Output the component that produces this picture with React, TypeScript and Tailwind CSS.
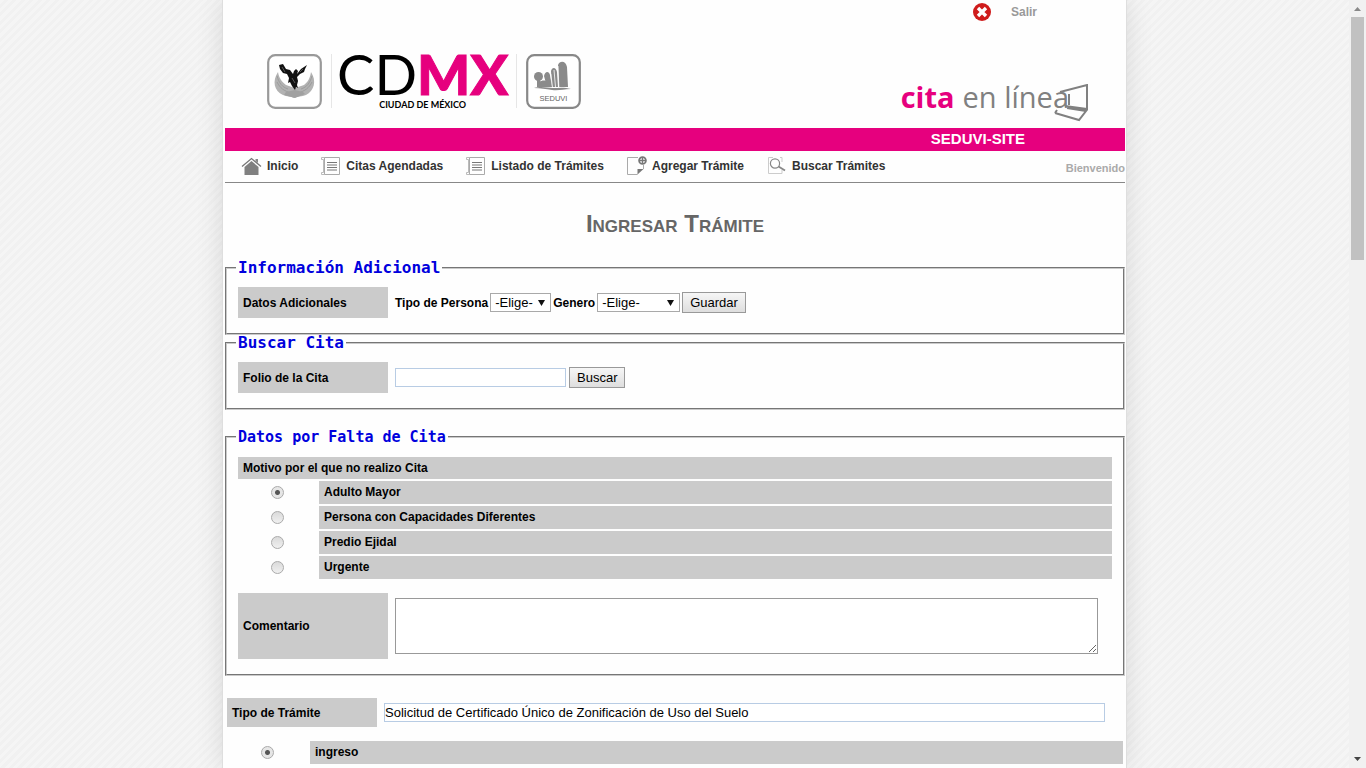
import React, { useState } from "react";

const radioClass =
  "m-0 size-[13px] appearance-none justify-self-center rounded-full border border-[#aaa] bg-[linear-gradient(#dadada,#f0f0f0)] checked:bg-[radial-gradient(circle,#555_0_2px,#e6e6e6_3px)]";
const buttonClass =
  "h-[21px] border border-[#999] bg-[linear-gradient(#f6f6f6,#dedede)] px-[7px] text-[13px] font-normal leading-[17px] text-black";
const inputClass = "h-[19px] border border-[#b8cce4] bg-white text-[13px] font-normal leading-4 text-black";
const legendClass = "ml-[-2px] px-0.5 font-['DejaVu_Sans_Mono',monospace] font-bold leading-4 text-[#0000dd]";
const fieldsetClass =
  "m-0 min-w-0 border-2 border-[#cacaca] pl-[11px] pr-[11px] pb-[15px] [border-style:groove]";

function HomeIcon() {
  return (
    <svg width="21" height="20" viewBox="0 0 21 20" aria-hidden="true">
      <path d="M1 10.500 10.500 2.500 20 10.500" fill="none" stroke="#777" strokeWidth="1.3" />
      <path d="M14.500 3h2.500v4l-2.500-2z" fill="#888" />
      <path d="M3.500 11 10.500 5l7 6v8h-14z" fill="#808080" />
    </svg>
  );
}

function ListIcon() {
  return (
    <svg width="20" height="20" viewBox="0 0 20 20" aria-hidden="true">
      <path d="M3.500 1.500H.5v2h2v13h-2v2h3" fill="none" stroke="#bbb" />
      <path d="M3.500 1.500h15v17h-15z" fill="none" stroke="#aaa" />
      <path d="M6 6.500h10M6 9h10M6 11.500h10M6 14h10" stroke="#777" />
    </svg>
  );
}

function AddPageIcon() {
  return (
    <svg width="20" height="20" viewBox="0 0 20 20" aria-hidden="true">
      <path d="M11 1.500H.5v17h10M16.500 9v4" fill="none" stroke="#aaa" />
      <path d="M10.500 18.500v-5.500h6z" fill="#777" />
      <circle cx="15.500" cy="4.500" r="3.400" fill="#fff" stroke="#777" strokeWidth="1.800" />
      <path d="M15.500 2v5M13 4.500h5" stroke="#777" strokeWidth="1.300" />
    </svg>
  );
}

function SearchIcon() {
  return (
    <svg width="20" height="20" viewBox="0 0 20 20" aria-hidden="true">
      <path d="M6 1.500H1.500v16H15V14M13 1.500h2V6" fill="none" stroke="#ccc" />
      <circle cx="8" cy="7.500" r="4.600" fill="#fff" stroke="#888" strokeWidth="1.200" />
      <path d="m11.500 10.500 6.500 4" stroke="#888" strokeWidth="1.800" />
    </svg>
  );
}

function AngelLogo() {
  return (
    <svg width="55" height="55" viewBox="0 0 55 55" role="img" aria-label="Gobierno de la Ciudad de México">
      <rect x="1.200" y="1.200" width="52.600" height="52.600" rx="7" fill="#fff" stroke="#999" strokeWidth="2.200" />
      <path
        d="M11 18c-6 9-4 19 5 23 4 2 8 1 11 3 3-2 8-1 12-3 8-4 11-14 5-23-1 6-3 10-7 13l-9 3-9-3c-4-3-7-7-8-13z"
        fill="#b2b2b2"
      />
      <path
        d="M10 22c2 7 5 11 11 13M45 22c-2 7-5 11-11 13M10 28c3 6 7 9 14 11M45 28c-3 6-7 9-14 11"
        stroke="#9c9c9c"
        fill="none"
      />
      <path d="m19 38 9-2 8 2 2 2-10 4-11-3z" fill="#a0a0a0" />
      <path
        d="m12 11 4-1 3 5 4 1 3 4 1-3 2-2 2 2-1 3 4-5 6-4-2 4-1 3-4 2-3 3 1 4-1 4 1 3-2-1-1 3-3-4-2-4-2 1 1-5-2-4-4-1-3-4z"
        fill="#111"
      />
      <path d="m15 13 3 5M33 18l3-3M25 24l3 5" stroke="#777" strokeWidth=".7" />
    </svg>
  );
}

function SeduviLogo() {
  return (
    <svg width="55" height="55" viewBox="0 0 55 55" role="img" aria-label="SEDUVI">
      <rect x="1.200" y="1.200" width="52.600" height="52.600" rx="7" fill="#fff" stroke="#888" strokeWidth="2.200" />
      <g fill="#8a8a8a">
        <circle cx="12.500" cy="22.500" r="4.500" />
        <path d="M11 26h3v7h-3zM13 28c3-2 7-2 9 0v5h-9z" />
        <path d="M18 22c1-5 5-5 6-1l2 12h-5zM25 17c1-4 5-4 6 1l1 15h-6zM32 11c2-5 8-4 9 2l1 20h-9z" />
        <path d="M8 34c8-2 13 0 19 0s11-1 18 1c-8 0-12 2-19 1s-11-2-18-2z" />
      </g>
      <path d="M24.800 20 26.500 33M32 12l.8 21M28 16l1.500 17" stroke="#fff" strokeWidth=".8" />
      <text x="27.500" y="47" textAnchor="middle" fontSize="7.500" fontFamily="Liberation Sans, sans-serif" fill="#666">
        SEDUVI
      </text>
    </svg>
  );
}

function Header() {
  return (
    <header>
      <div className="flex h-6 items-center justify-end gap-5 pr-[88px]">
        <svg width="18" height="18" viewBox="0 0 18 18" aria-hidden="true">
          <circle cx="9" cy="9" r="9" fill="#cf1c1c" />
          <path d="m5 5 8 8M13 5l-8 8" stroke="#fff" strokeWidth="3.400" />
        </svg>
        <a href="#salir" className="font-bold text-[#999]">
          Salir
        </a>
      </div>
      <div className="flex h-[104px] justify-between pl-[42px] pr-9">
        <div className="flex items-start gap-[9px] pt-[30px]">
          <AngelLogo />
          <div className="flex h-[54px] flex-col items-center border-x border-[#e6e6e6] pl-[5px] pr-2 font-['Lato',sans-serif]">
            <div className="flex text-[56px] leading-10 text-black">
              <span>CD</span>
              <span className="font-black text-[#e6007e] [-webkit-text-stroke:1px_#e6007e]">MX</span>
            </div>
            <div className="mt-1.5 text-[9px] font-bold leading-[10px] text-black">CIUDAD DE MÉXICO</div>
          </div>
          <SeduviLogo />
        </div>
        <div className="flex items-start pt-[53px] font-['Open_Sans',sans-serif] text-[29px] leading-10">
          <span className="font-bold text-[#e6007e]">cita</span>
          <span className="ml-2 text-[#808080]">en línea</span>
          <svg className="-ml-4 mt-[7px]" width="36" height="38" viewBox="0 0 36 38" aria-hidden="true">
            <path
              d="M7 8 34 1v24L12 22M16 10v11M2 29l24 7 7-9-19-3M2 29l2-3"
              fill="none"
              stroke="#808080"
              strokeWidth="2"
            />
          </svg>
        </div>
      </div>
      <div className="h-[23px] bg-[#e6007e] pr-[100px] text-right text-[15px] font-bold leading-[22px] text-white">
        SEDUVI-SITE
      </div>
    </header>
  );
}

const links = [
  { text: "Inicio", Icon: HomeIcon },
  { text: "Citas Agendadas", Icon: ListIcon },
  { text: "Listado de Trámites", Icon: ListIcon },
  { text: "Agregar Trámite", Icon: AddPageIcon },
  { text: "Buscar Trámites", Icon: SearchIcon },
];

function Nav() {
  return (
    <nav className="flex h-8 items-center border-b border-[#888] pb-0.5 pl-4">
      <ul className="flex gap-[23px]">
        {links.map(({ text, Icon }) => (
          <li key={text}>
            <a href="#tramites" className="flex items-center gap-[5px] font-bold text-[#333]">
              <Icon />
              <span>{text}</span>
            </a>
          </li>
        ))}
      </ul>
      <span className="ml-auto pt-1.5 text-[11px] font-bold text-[#aaa]">Bienvenido</span>
    </nav>
  );
}

function Select({ id, options, wide }: { id: string; options: string[]; wide?: boolean }) {
  return (
    <span className="grid items-center">
      <select
        id={id}
        className={`col-start-1 row-start-1 h-[19px] appearance-none border border-[#a9a9a9] bg-white pl-1 text-[13px] font-normal leading-4 text-black ${
          wide ? "w-[83px]" : "w-[61px]"
        }`}
      >
        {options.map((option) => (
          <option key={option}>{option}</option>
        ))}
      </select>
      <svg
        className="pointer-events-none col-start-1 row-start-1 mr-1.5 justify-self-end"
        width="7"
        height="6"
        viewBox="0 0 7 6"
        aria-hidden="true"
      >
        <path d="M0 0h7L3.500 6z" fill="#111" />
      </svg>
    </span>
  );
}

const reasons = ["Adulto Mayor", "Persona con Capacidades Diferentes", "Predio Ejidal", "Urgente"];

function ReasonList() {
  const [reason, setReason] = useState(reasons[0]);
  return (
    <div className="flex flex-col gap-0.5" role="radiogroup" aria-labelledby="motivo">
      <div id="motivo" className="h-[22px] bg-[#cbcbcb] pl-[5px] leading-[22px]">
        Motivo por el que no realizo Cita
      </div>
      {reasons.map((text, i) => (
        <div key={text} className="grid grid-cols-[79px_1fr] items-center gap-0.5">
          <input
            id={`motivo-${i}`}
            type="radio"
            name="motivo"
            checked={reason === text}
            onChange={() => setReason(text)}
            className={radioClass}
          />
          <label htmlFor={`motivo-${i}`} className="h-[23px] bg-[#cbcbcb] pl-[5px] leading-[22px]">
            {text}
          </label>
        </div>
      ))}
    </div>
  );
}

function ScrollBar() {
  return (
    <div className="flex w-[17px] shrink-0 flex-col items-center bg-[#f1f1f1]" aria-hidden="true">
      <svg width="17" height="17" viewBox="0 0 17 17">
        <path d="M5 11h7l-3.500-4z" fill="#888" />
      </svg>
      <div className="h-[243px] w-[13px] bg-[#c1c1c1]" />
      <svg className="mt-auto" width="17" height="17" viewBox="0 0 17 17">
        <path d="M5 6h7l-3.500 4z" fill="#444" />
      </svg>
    </div>
  );
}

export default function App() {
  const [folio, setFolio] = useState("");
  return (
    <div className="flex h-screen overflow-hidden font-['Liberation_Sans',Arial,sans-serif] text-xs text-black">
      <div className="min-w-0 flex-1 overflow-hidden bg-[repeating-linear-gradient(135deg,#f5f5f5_0_3px,#f1f1f1_3px_6px)]">
        <div className="mx-auto min-h-full w-full max-w-[903px] bg-[#fefefe] pl-0.5 pr-px shadow-[0_0_0_1px_#dedede,0_0_26px_rgba(0,0,0,0.12)]">
          <Header />
          <Nav />
          <main className="font-bold">
            <h1 className="pb-5 pt-6 text-center text-2xl leading-[33px] text-[#666] [font-variant-caps:small-caps]">
              Ingresar Trámite
            </h1>
            <form onSubmit={(e) => e.preventDefault()}>
              <fieldset className={fieldsetClass}>
                <legend className={`${legendClass} text-base`}>Información Adicional</legend>
                <div className="flex items-center gap-[7px] pt-[11px]">
                  <div className="flex h-[31px] w-[150px] items-center bg-[#cbcbcb] pl-[5px]">Datos Adicionales</div>
                  <div className="flex items-center gap-0.5">
                    <label htmlFor="persona">Tipo de Persona</label>
                    <Select id="persona" options={["-Elige-", "Física", "Moral"]} />
                    <label htmlFor="genero">Genero</label>
                    <Select id="genero" options={["-Elige-", "Femenino", "Masculino"]} wide />
                    <button type="button" className={buttonClass}>
                      Guardar
                    </button>
                  </div>
                </div>
              </fieldset>
              <fieldset className={fieldsetClass}>
                <legend className={`${legendClass} text-base`}>Buscar Cita</legend>
                <div className="flex items-center gap-[7px] pt-[11px]">
                  <label htmlFor="folio" className="flex h-[31px] w-[150px] items-center bg-[#cbcbcb] pl-[5px]">
                    Folio de la Cita
                  </label>
                  <div className="flex items-center gap-[3px]">
                    <input
                      id="folio"
                      type="text"
                      value={folio}
                      onChange={(e) => setFolio(e.target.value)}
                      className={`${inputClass} w-[171px]`}
                    />
                    <button type="button" className={buttonClass}>
                      Buscar
                    </button>
                  </div>
                </div>
              </fieldset>
              <fieldset className={`${fieldsetClass} mt-[19px]`}>
                <legend className={`${legendClass} text-[15px]`}>Datos por Falta de Cita</legend>
                <div className="flex flex-col gap-3.5 pt-3">
                  <ReasonList />
                  <div className="flex items-center gap-[7px] pr-3.5">
                    <label
                      htmlFor="comentario"
                      className="flex h-[66px] w-[150px] shrink-0 items-center bg-[#cbcbcb] pl-[5px]"
                    >
                      Comentario
                    </label>
                    <textarea id="comentario" className="h-14 w-full resize border border-[#999] bg-white font-normal" />
                  </div>
                </div>
              </fieldset>
              <div className="flex items-center gap-[7px] pl-0.5 pr-5 pt-[22px]">
                <label htmlFor="tipo" className="flex h-[29px] w-[150px] shrink-0 items-center bg-[#cbcbcb] pl-[5px]">
                  Tipo de Trámite
                </label>
                <input
                  id="tipo"
                  type="text"
                  defaultValue="Solicitud de Certificado Único de Zonificación de Uso del Suelo"
                  className={`${inputClass} w-full`}
                />
              </div>
              <div className="grid grid-cols-[81px_1fr] items-center gap-0.5 pl-0.5 pr-0.5 pt-3.5">
                <input id="ingreso" type="radio" name="accion" defaultChecked className={radioClass} />
                <label htmlFor="ingreso" className="h-[23px] bg-[#cbcbcb] pl-[5px] leading-[22px]">
                  ingreso
                </label>
              </div>
            </form>
          </main>
        </div>
      </div>
      <ScrollBar />
    </div>
  );
}
